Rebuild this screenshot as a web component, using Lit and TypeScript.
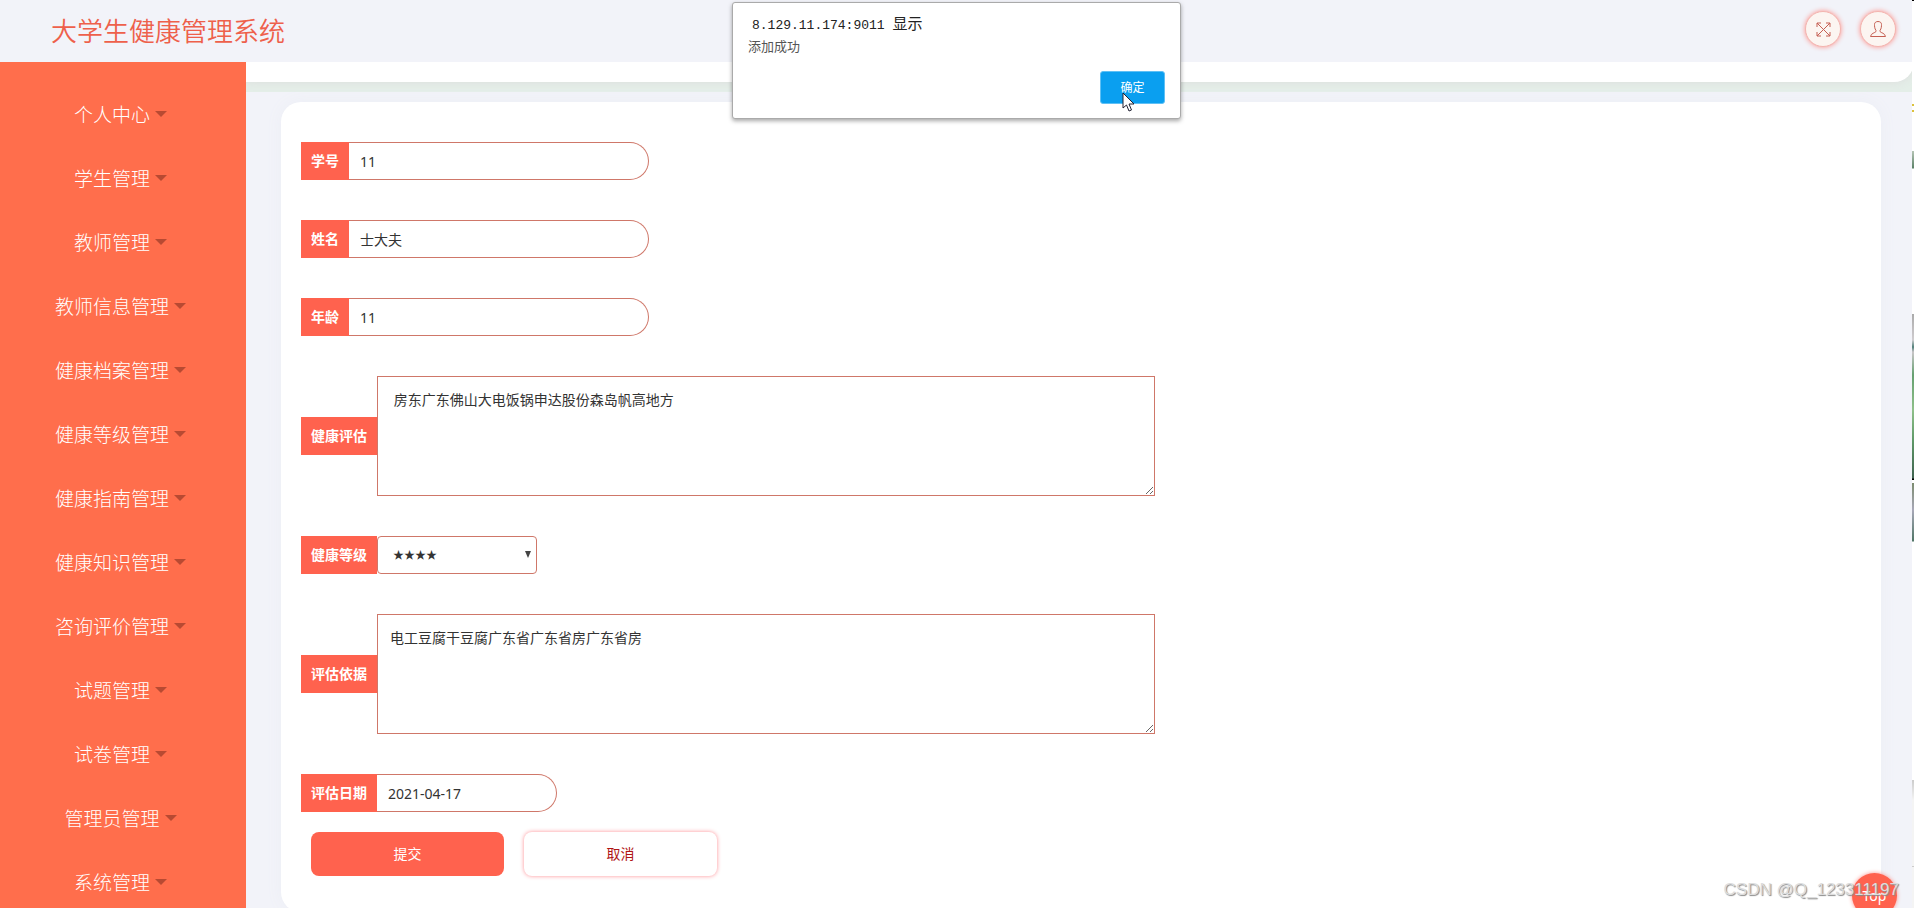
import { LitElement, html, css, svg } from "lit";
import { customElement } from "lit/decorators.js";

const MENU = [
  "个人中心", "学生管理", "教师管理", "教师信息管理", "健康档案管理", "健康等级管理", "健康指南管理",
  "健康知识管理", "咨询评价管理", "试题管理", "试卷管理", "管理员管理", "系统管理",
];

const expandIcon = svg`<path d="M1 1L14 14M14 1L1 14M1 5V1H5M10 1H14V5M14 10V14H10M5 14H1V10"/>`;
const userIcon = svg`<path d="M6 9.500C4.500 7.500 4.500 5 4.500 3.500C4.500 1.500 6 0.500 8 0.500S11.500 1.500 11.500 3.500C11.500 5 11.500 7.500 10 9.500V10.500C11 12 15 12 15.500 15.500H0.500C1 12 5 12 6 10.500Z"/>`;

@customElement("app-root")
export class AppRoot extends LitElement {
  static styles = css`
    :host {
      display: block;
      position: relative;
      height: 100vh;
      overflow: hidden;
      background: #f2f3f9;
      color: #333;
      font: 14px/20px "Noto Sans", "Noto Sans CJK SC", sans-serif;
    }
    * { box-sizing: border-box; }
    .header {
      display: flex;
      align-items: center;
      justify-content: space-between;
      height: 62px;
      padding: 0 18px 4px 51px;
    }
    .title {
      margin: 4px 0 0;
      color: #ee604b;
      font-size: 26px;
      line-height: 36px;
      font-weight: 350;
    }
    .tools { display: flex; gap: 19px; }
    .tool {
      display: grid;
      place-items: center;
      width: 36px;
      height: 36px;
      padding: 0;
      border: 1px solid #f3b5b0;
      border-radius: 50%;
      background: #fcf5f1;
      box-shadow: 0 0 5px #ff8f88;
    }
    .tool svg { fill: none; stroke: #c55f52; stroke-width: 1; }
    .body { display: flex; align-items: flex-start; }
    .side {
      flex: none;
      width: 246px;
      min-height: calc(100vh - 62px);
      padding-top: 21px;
      background: #ff6e4c;
    }
    .menu { margin: 0; padding: 0; list-style: none; }
    .link {
      display: flex;
      align-items: center;
      justify-content: center;
      gap: 5px;
      height: 64px;
      padding-right: 5px;
      color: #fff;
      font-size: 19px;
      font-weight: 300;
      text-decoration: none;
    }
    .caret {
      margin-bottom: 2px;
      border: 6px solid transparent;
      border-top-color: #b84a32;
      border-bottom: 0;
    }
    .main { flex: 1; min-width: 0; }
    .strip { background: #e4eee8; padding-bottom: 10px; overflow: hidden; }
    .crumb {
      height: 20px;
      background: #fff;
      border-bottom-right-radius: 20px;
      box-shadow: 0 0 10px #ddd;
    }
    .card {
      margin: 10px 33px 0 35px;
      padding: 40px 20px 36px;
      border-radius: 20px;
      background: #fff;
      box-shadow: 0 0 16px #eceef5;
    }
    .form { display: flex; flex-direction: column; gap: 40px; }
    .row { display: flex; align-items: center; }
    .label {
      display: flex;
      align-items: center;
      height: 38px;
      padding: 0 10px;
      background: #ff624e;
      color: #fff;
      font-weight: 700;
    }
    .field {
      margin: 0;
      border: 1px solid #cf7769;
      background: #fff;
      color: #333;
      font: inherit;
      outline: 0;
    }
    .text {
      width: 300px;
      height: 38px;
      padding: 0 11px;
      border-left: 0;
      border-radius: 0 20px 20px 0;
    }
    .date { width: 180px; }
    .area { width: 778px; height: 120px; padding: 13px 12px 12px; resize: both; }
    .pick { position: relative; }
    .select {
      appearance: none;
      display: block;
      width: 160px;
      height: 38px;
      padding: 0 15px;
      border-radius: 4px;
      font-size: 11px;
    }
    .pick::after {
      content: "";
      position: absolute;
      right: 6px;
      top: 15px;
      border: 3px solid transparent;
      border-top: 7px solid #444;
      border-bottom: 0;
      pointer-events: none;
    }
    .actions { display: flex; gap: 20px; margin: 20px 10px 0; }
    .btn {
      width: 193px;
      height: 44px;
      border: 0;
      border-radius: 8px;
      background: #ff624e;
      color: #fff;
      font: inherit;
    }
    .cancel { background: #fff; color: #b01515; box-shadow: 0 0 4px #ff8f95; }
    .dialog {
      position: absolute;
      top: 2px;
      left: 50%;
      width: 449px;
      height: 117px;
      margin: 0 0 0 -225px;
      padding: 13px 15px 14px;
      display: flex;
      flex-direction: column;
      border: 1px solid #aaa;
      border-radius: 3px;
      background: #fff;
      box-shadow: 0 2px 4px rgba(0, 0, 0, 0.35);
    }
    .origin {
      margin: 0 0 0 4px;
      color: #222;
      font: 13px/20px "Liberation Mono", "Noto Sans CJK SC", monospace;
    }
    .han { font-size: 15px; }
    .note { margin: 0; color: #555; font-size: 13px; }
    .ok {
      align-self: flex-end;
      margin-top: auto;
      width: 65px;
      height: 33px;
      border: 1px solid #5fc0f5;
      border-radius: 3px;
      background: #0a9ff0;
      color: #fff;
      font: inherit;
      font-size: 12px;
    }
    .cursor { position: absolute; left: 389px; top: 89px; }
    .top {
      position: absolute;
      right: 17px;
      bottom: -10px;
      width: 45px;
      height: 45px;
      border-radius: 50%;
      background: #ff624e;
      box-shadow: 0 0 4px #ff8f88;
      color: #fff;
      text-align: center;
      line-height: 45px;
      text-decoration: none;
    }
    .mark {
      position: absolute;
      right: 15px;
      bottom: 8px;
      color: #ddd;
      font: 17px/20px "Liberation Sans", sans-serif;
      text-shadow: 1px 1px 1px #888;
    }
    .edge {
      position: absolute;
      right: 0;
      top: 0;
      bottom: 0;
      width: 2px;
      background: linear-gradient(#000 0 1px, #fff 1px 104px, #dcc23c 104px 106px, #fff 106px 110px, #dcc23c 110px 112px, #fff 112px 151px, #b5c4b5 151px, #5c8268 168px, #fff 169px 314px, #aaa 314px, #d0cdd0 340px, #4f7f78 347px, #c9c5c8 352px, #65a070 375px, #8fc08a 410px, #5f9968 440px, #3f6350 478px, #000 479px 480px, #fff 480px 483px, #7c8c70 483px, #a8a8b8 510px, #4f7465 541px, #fff 542px 780px, #ccc 780px, #f4f4f4 800px 866px, #ccc 866px 867px, #f4f4f4 867px);
    }
  `;

  render() {
    return html`
      <header class="header">
        <h1 class="title">大学生健康管理系统</h1>
        <div class="tools">
          <button class="tool" aria-label="全屏"><svg width="15" height="15" viewBox="0 0 15 15">${expandIcon}</svg></button>
          <button class="tool" aria-label="用户"><svg width="16" height="16" viewBox="0 0 16 16">${userIcon}</svg></button>
        </div>
      </header>
      <div class="body">
        <nav class="side">
          <ul class="menu">
            ${MENU.map((m) => html`<li><a class="link" href="#">${m}<span class="caret"></span></a></li>`)}
          </ul>
        </nav>
        <main class="main">
          <div class="strip"><div class="crumb"></div></div>
          <section class="card">
            <form class="form">
              <div class="row"><label class="label" for="no">学号</label><input class="field text" id="no" .value=${"11"} /></div>
              <div class="row"><label class="label" for="name">姓名</label><input class="field text" id="name" .value=${"士大夫"} /></div>
              <div class="row"><label class="label" for="age">年龄</label><input class="field text" id="age" .value=${"11"} /></div>
              <div class="row"><label class="label" for="eval">健康评估</label><textarea class="field area" id="eval" .value=${" 房东广东佛山大电饭锅申达股份森岛帆高地方"}></textarea></div>
              <div class="row"><label class="label" for="level">健康等级</label><span class="pick"><select class="field select" id="level"><option>★★★★</option></select></span></div>
              <div class="row"><label class="label" for="basis">评估依据</label><textarea class="field area" id="basis" .value=${"电工豆腐干豆腐广东省广东省房广东省房"}></textarea></div>
              <div class="row"><label class="label" for="date">评估日期</label><input class="field text date" id="date" .value=${"2021-04-17"} /></div>
            </form>
            <div class="actions">
              <button class="btn">提交</button>
              <button class="btn cancel">取消</button>
            </div>
          </section>
        </main>
      </div>
      <div class="edge"></div>
      <a class="top" href="#">Top</a>
      <div class="mark">CSDN @Q_123311197</div>
      <div class="dialog" role="alertdialog">
        <p class="origin">8.129.11.174:9011 <span class="han">显示</span></p>
        <p class="note">添加成功</p>
        <button class="ok">确定</button>
        <svg class="cursor" width="13" height="20" viewBox="0 0 13 20"><path d="M1 1V16L4.500 13L7 19L9.500 18L7 12H12Z" fill="#fff" stroke="#223" /></svg>
      </div>
    `;
  }
}
